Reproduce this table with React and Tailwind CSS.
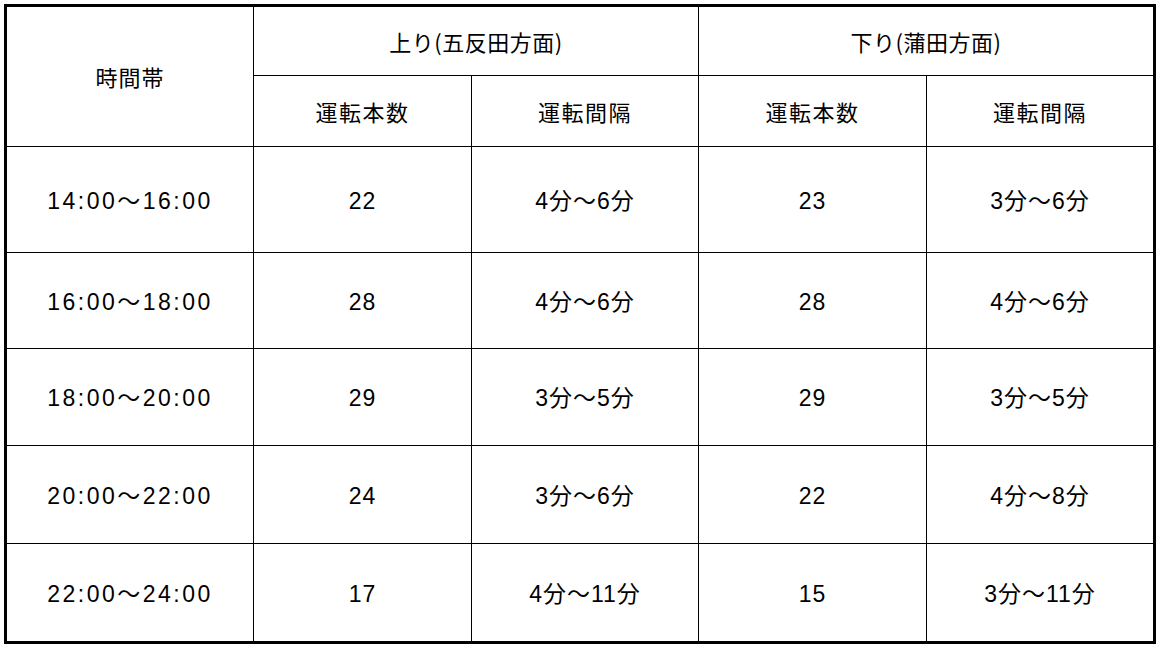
export default function App() {
  const rows = [
    ["14:00～16:00", "22", "4分～6分", "23", "3分～6分"],
    ["16:00～18:00", "28", "4分～6分", "28", "4分～6分"],
    ["18:00～20:00", "29", "3分～5分", "29", "3分～5分"],
    ["20:00～22:00", "24", "3分～6分", "22", "4分～8分"],
    ["22:00～24:00", "17", "4分～11分", "15", "3分～11分"],
  ];

  const cell = "bg-white flex items-center justify-center";

  return (
    <div className="min-h-screen bg-white pt-[4px] pl-[4px] font-['Noto_Sans_CJK_JP',sans-serif] text-[22px] text-black">
      <div className="w-[1152px] border-[3px] border-black">
        <div className="grid grid-cols-[246px_217px_226px_227px_226px] grid-rows-[68px_70px_105px_95px_96px_97px_97px] gap-px bg-black">
          <div className={`${cell} row-span-2 tracking-[1px]`}>時間帯</div>
          <div className={`${cell} col-span-2 tracking-[0.5px]`}>上り(五反田方面)</div>
          <div className={`${cell} col-span-2 tracking-[0.5px]`}>下り(蒲田方面)</div>
          <div className={`${cell} tracking-[1.5px]`}>運転本数</div>
          <div className={`${cell} tracking-[1.5px]`}>運転間隔</div>
          <div className={`${cell} tracking-[1.5px]`}>運転本数</div>
          <div className={`${cell} tracking-[1.5px]`}>運転間隔</div>
          {rows.map((r) =>
            r.map((v, i) => (
              <div
                key={r[0] + i}
                className={`${cell} pt-[3px] text-[23px] font-['Liberation_Sans','Noto_Sans_CJK_JP',sans-serif] ${
                  i === 0 ? "tracking-[2.5px]" : "tracking-[1px]"
                }`}
              >
                {v}
              </div>
            ))
          )}
        </div>
      </div>
    </div>
  );
}
